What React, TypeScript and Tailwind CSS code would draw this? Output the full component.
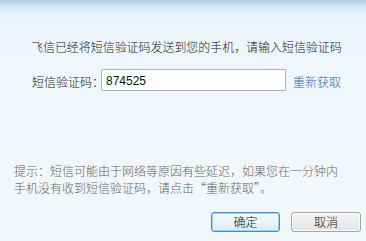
export default function App() {
    return (
        <div
            className="flex flex-col w-[366px] h-[241px] overflow-hidden text-[12px] leading-[16px] text-[#222] font-light"
            style={{ fontFamily: '"Noto Sans CJK SC", "Noto Sans", sans-serif' }}
        >
            <div className="flex flex-col flex-1 bg-[linear-gradient(to_bottom,#a9cbea_0px,#d4e5f4_6px,#eaf2fa_14px,#f0f6fb_60px,#f2f7fb_100%)]">
                <p className="pt-[39px] pl-[31px] whitespace-nowrap tracking-[-0.05px]">
                    飞信已经将短信验证码发送到您的手机，请输入短信验证码
                </p>

                <div className="flex items-center mt-[14px] pl-[32px] h-[22px]">
                    <span className="w-[69px] whitespace-nowrap pt-[4px]">短信验证码：</span>
                    <input
                        type="text"
                        defaultValue="874525"
                        className="w-[185px] h-[22px] px-[4px] pt-[1px] border border-[#a7b6c6] bg-white text-[12px] text-[#111] rounded-[1px] focus:outline-none"
                        style={{ fontFamily: '"Liberation Sans", Arial, sans-serif' }}
                    />
                    <a className="ml-[7px] pt-[4px] text-[#2c6db5] whitespace-nowrap cursor-pointer">重新获取</a>
                </div>

                <div className="mt-[71px] pl-[14px] text-[#666] leading-[17px] whitespace-nowrap">
                    <p>提示：短信可能由于网络等原因有些延迟，如果您在一分钟内</p>
                    <p>手机没有收到短信验证码，请点击“重新获取”。</p>
                </div>

                <div className="flex justify-end gap-[11px] mt-[16px] pr-[5px]">
                    <button
                        type="button"
                        className="w-[69px] h-[20px] rounded-[3px] border border-[#3d8fd3] bg-[linear-gradient(to_bottom,#f4faff,#dcecf9)] shadow-[inset_0_0_0_1px_#9fd0f5] text-[12px] leading-[18px] text-[#111]"
                    >
                        确定
                    </button>
                    <button
                        type="button"
                        className="w-[70px] h-[20px] rounded-[3px] border border-[#a5a5a5] bg-[linear-gradient(to_bottom,#f6f6f6,#e3e3e3)] shadow-[inset_0_0_0_1px_#fbfbfb] text-[12px] leading-[18px] text-[#111]"
                    >
                        取消
                    </button>
                </div>
            </div>
        </div>
    )
}
